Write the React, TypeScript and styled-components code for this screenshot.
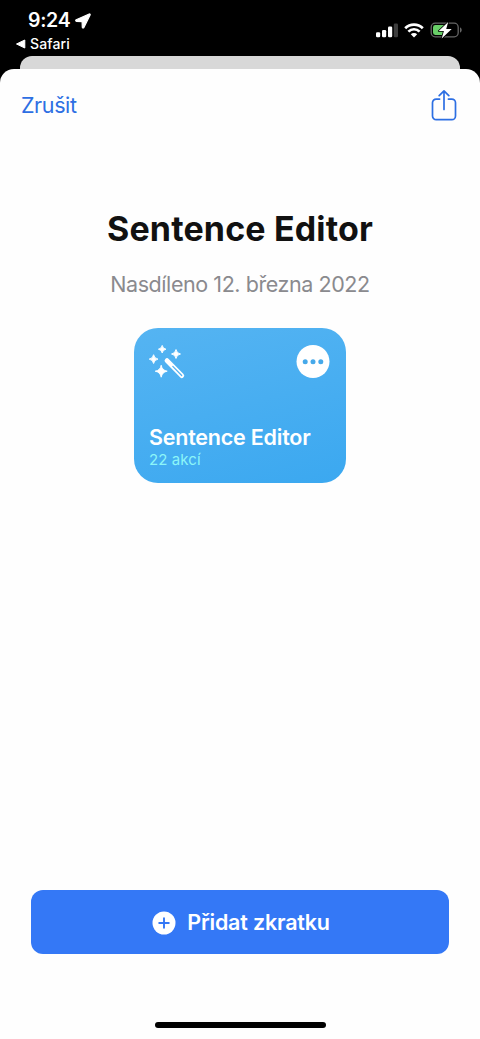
import React from "react";
import styled, { createGlobalStyle } from "styled-components";

const GlobalStyle = createGlobalStyle`
  * { box-sizing: border-box; }
  html, body { margin: 0; padding: 0; background: #000; }
  body { font-family: Inter, "Liberation Sans", sans-serif; overflow: hidden; }
  svg { display: block; flex: none; }
`;

const Screen = styled.div`
  width: 480px;
  height: 1039px;
  display: flex;
  flex-direction: column;
  background: #000;
`;

const StatusBar = styled.header`
  height: 56px;
  display: flex;
  justify-content: space-between;
  padding: 9px 17px 0 15px;
  color: #fff;
`;

const StatusLeft = styled.div`
  display: flex;
  flex-direction: column;
`;

const Clock = styled.div`
  display: flex;
  align-items: center;
  gap: 5px;
  height: 23px;
  padding-left: 13px;
`;

const BackLink = styled.div`
  display: flex;
  align-items: center;
  gap: 4px;
  height: 24px;
`;

const StatusIcons = styled.div`
  display: flex;
  align-items: center;
  gap: 6px;
  height: 18px;
  margin-top: 12px;
`;

const Text = styled.span<{ $size: number; $weight: number; $spacing?: number; $color?: string }>`
  font-size: ${(p) => p.$size}px;
  font-weight: ${(p) => p.$weight};
  letter-spacing: ${(p) => p.$spacing ?? 0}px;
  color: ${(p) => p.$color ?? "inherit"};
  line-height: 1.2;
  white-space: nowrap;
`;

const BackSheet = styled.div`
  height: 13px;
  margin: 0 20px;
  background: #d8d8d8;
  border-radius: 12px 12px 0 0;
`;

const Sheet = styled.main`
  flex: 1;
  display: flex;
  flex-direction: column;
  align-items: center;
  background: #fefefe;
  border-radius: 14px 14px 0 0;
`;

const NavBar = styled.nav`
  align-self: stretch;
  height: 73px;
  display: flex;
  align-items: center;
  justify-content: space-between;
  padding: 0 23px 0 21px;
`;

const Title = styled.h1`
  margin: 66px 0 0;
  height: 42px;
  font-size: 34px;
  line-height: 42px;
  font-weight: 700;
  letter-spacing: 0.15px;
  color: #111;
  white-space: nowrap;
`;

const Subtitle = styled.p`
  margin: 20px 0 0;
  height: 28px;
  font-size: 21.5px;
  line-height: 28px;
  letter-spacing: -0.43px;
  color: #8a8a8e;
  white-space: nowrap;
`;

const Card = styled.section`
  width: 212px;
  height: 155px;
  margin-top: 30px;
  padding: 17px 16px 14px 15px;
  display: flex;
  flex-direction: column;
  justify-content: space-between;
  border-radius: 24px;
  background: linear-gradient(165deg, #55b4f2, #3ba8f0);
  color: #fff;
`;

const CardTop = styled.div`
  display: flex;
  justify-content: space-between;
`;

const CardLabels = styled.div`
  display: flex;
  flex-direction: column;
`;

const AddButton = styled.button`
  width: 418px;
  height: 64px;
  margin: auto 0 68px;
  padding: 1px 0 0 2px;
  border: 0;
  border-radius: 12px;
  display: flex;
  align-items: center;
  justify-content: center;
  gap: 11px;
  background: #3478f6;
  color: #fff;
  font-family: inherit;
`;

const HomeIndicator = styled.div`
  width: 171px;
  height: 6px;
  margin-bottom: 11px;
  border-radius: 3px;
  background: #000;
`;

const LocationArrow = () => (
  <svg width="16" height="16" viewBox="0 0 16 16">
    <path d="M14.2 1 1.200 6.800c-.8.4-.6 1.600.3 1.600l5.600.2.2 5.600c0 .9 1.200 1.100 1.600.3L15.100 1.900c.3-.7-.2-1.200-.9-.9Z" fill="#fff" stroke="#fff" strokeWidth="1.200" strokeLinejoin="round" />
  </svg>
);

const BackTriangle = () => (
  <svg width="11" height="10" viewBox="0 0 11 10">
    <path d="M1.5 5 9.8 1v8Z" fill="#fff" stroke="#fff" strokeWidth="1" strokeLinejoin="round" />
  </svg>
);

const Signal = () => (
  <svg width="22" height="15" viewBox="0 0 22 15">
    <rect x="0" y="9.3" width="4.2" height="5" rx="1.2" fill="#fff" />
    <rect x="6" y="7" width="4.2" height="7.3" rx="1.2" fill="#fff" />
    <rect x="12" y="3.500" width="4.2" height="10.8" rx="1.2" fill="#fff" />
    <rect x="17.8" y="0.500" width="4.2" height="13.8" rx="1.2" fill="#3d3d3d" />
  </svg>
);

const Wifi = () => (
  <svg width="20" height="15" viewBox="0 0 20 15">
    <g fill="none" stroke="#fff" strokeWidth="2.7">
      <path d="M1.2 5.2a12.4 12.4 0 0 1 17.6 0" />
      <path d="M4.4 8.6a7.9 7.9 0 0 1 11.2 0" />
    </g>
    <path d="M10 14.5 6.8 11.3a4.6 4.6 0 0 1 6.4 0Z" fill="#fff" />
  </svg>
);

const Battery = () => (
  <svg width="33" height="18" viewBox="0 0 33 18">
    <rect x="1.2" y="2.2" width="27" height="13.6" rx="4" fill="none" stroke="#666" strokeWidth="1.3" />
    <path d="M5.5 4H14.5V14H5.5A2.4 2.4 0 0 1 3 11.6V6.4A2.4 2.4 0 0 1 5.5 4Z" fill="#68ce67" />
    <path d="M30 6.5c2.3.6 2.3 4.4 0 5Z" fill="#666" />
    <path d="M18.200 1 8.700 10h5.200l-2.200 7.600 10-9.600H16.200Z" fill="#fff" stroke="#000" strokeWidth="1.600" paintOrder="stroke" strokeLinejoin="round" />
  </svg>
);

const Share = () => (
  <svg width="26" height="32" viewBox="0 0 26 32" fill="none" stroke="#2d6fe3" strokeWidth="1.7" strokeLinecap="round" strokeLinejoin="round">
    <path d="M8.600 9.100H5.200A3.700 3.700 0 0 0 1.500 12.800V26a3.700 3.700 0 0 0 3.700 3.700h15.600a3.700 3.700 0 0 0 3.700-3.700V12.800a3.700 3.700 0 0 0-3.700-3.700h-3.400" />
    <path d="M13 19.400V.900M8.200 5.700 13 .900 17.800 5.700" />
  </svg>
);

const star = (x: number, y: number, r: number) => {
  const k = r * 0.15;
  return `M${x} ${y - r}Q${x + k} ${y - k} ${x + r} ${y}Q${x + k} ${y + k} ${x} ${y + r}Q${x - k} ${y + k} ${x - r} ${y}Q${x - k} ${y - k} ${x} ${y - r}Z`;
};

const Wand = () => (
  <svg width="37" height="34" viewBox="0 0 37 34">
    <g fill="#fff" stroke="#fff" strokeWidth=".9" strokeLinejoin="round">
      <path d={star(13.2, 4.2, 3.8)} />
      <path d={star(27, 9, 4.5)} />
      <path d={star(4.6, 14.1, 4.4)} />
      <path d={star(12.2, 26.2, 6)} />
    </g>
    <path d="M18 15.600 32.800 30.600" stroke="#fff" strokeWidth="4.8" strokeLinecap="round" />
    <path d="M23.800 21.400 32.700 30.500" stroke="#50b0f1" strokeWidth="1.2" strokeLinecap="round" />
  </svg>
);

const More = () => (
  <svg width="34" height="34" viewBox="0 0 34 34">
    <circle cx="17" cy="16.5" r="16.5" fill="#fff" />
    <g fill="#46a9ea">
      <circle cx="9.2" cy="16.7" r="2.5" />
      <circle cx="17" cy="16.7" r="2.5" />
      <circle cx="24.8" cy="16.7" r="2.5" />
    </g>
  </svg>
);

const Plus = () => (
  <svg width="24" height="24" viewBox="0 0 24 24">
    <circle cx="12" cy="12" r="11.5" fill="#fff" />
    <path d="M12 7.2v9.6M7.2 12h9.6" stroke="#3478f6" strokeWidth="1.9" strokeLinecap="round" />
  </svg>
);

export default function App() {
  return (
    <>
      <GlobalStyle />
      <Screen>
        <StatusBar>
          <StatusLeft>
            <Clock>
              <Text $size={19.5} $weight={600} $spacing={-0.3}>9:24</Text>
              <LocationArrow />
            </Clock>
            <BackLink>
              <BackTriangle />
              <Text $size={14} $weight={500} $spacing={0.15}>Safari</Text>
            </BackLink>
          </StatusLeft>
          <StatusIcons>
            <Signal />
            <Wifi />
            <Battery />
          </StatusIcons>
        </StatusBar>
        <BackSheet />
        <Sheet>
          <NavBar>
            <Text $size={21.5} $weight={400} $spacing={-0.4} $color="#2d6fe3">Zrušit</Text>
            <Share />
          </NavBar>
          <Title>Sentence Editor</Title>
          <Subtitle>Nasdíleno 12. března 2022</Subtitle>
          <Card>
            <CardTop>
              <Wand />
              <More />
            </CardTop>
            <CardLabels>
              <Text $size={21.5} $weight={600} $spacing={-0.22}>Sentence Editor</Text>
              <Text $size={15} $weight={400} $spacing={0.1} $color="#8cf5f8">22 akcí</Text>
            </CardLabels>
          </Card>
          <AddButton>
            <Plus />
            <Text $size={21.5} $weight={600} $spacing={-0.18}>Přidat zkratku</Text>
          </AddButton>
          <HomeIndicator />
        </Sheet>
      </Screen>
    </>
  );
}
